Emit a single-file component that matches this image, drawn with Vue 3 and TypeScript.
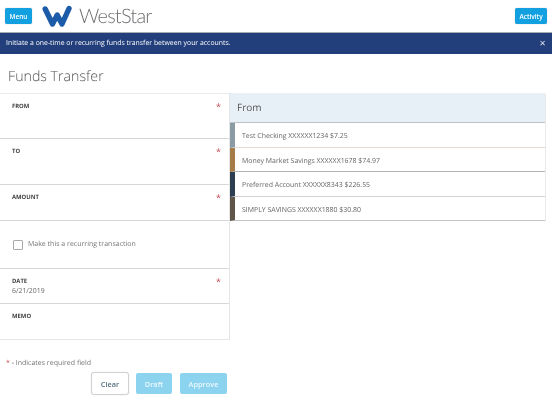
<script setup lang="ts">
import { ref } from 'vue'

const accounts = [
  { label: 'Test Checking XXXXXX1234 $7.25', color: '#8a9ba5', line: '#e3dcd6' },
  { label: 'Money Market Savings XXXXXX1678 $74.97', color: '#a57c45', line: '#b5b5b5' },
  { label: 'Preferred Account XXXXXX8343 $226.55', color: '#2c3e50', line: '#d3d3d3' },
  { label: 'SIMPLY SAVINGS XXXXXX1880 $30.80', color: '#5f5548', line: '#c4c4c4' }
]

const showBanner = ref(true)
const recurring = ref(false)
</script>

<template>
  <div class="page">
    <header class="topbar">
      <button class="btn-top btn-menu">Menu</button>
      <div class="logo">
        <svg class="logo-mark" viewBox="0 0 30 22" width="30" height="22">
          <path
            d="M3.2 4 L10.5 19 L15.2 10 L20 19 L27 3.5"
            fill="none"
            stroke="#1c5ba8"
            stroke-width="5.4"
            stroke-linecap="round"
            stroke-linejoin="round"
          />
        </svg>
        <span class="logo-text">WestStar</span>
      </div>
      <button class="btn-top btn-activity">Activity</button>
    </header>

    <div v-if="showBanner" class="banner">
      <span>Initiate a one-time or recurring funds transfer between your accounts.</span>
      <span class="banner-close" @click="showBanner = false">✕</span>
    </div>

    <h1 class="title">Funds Transfer</h1>

    <div class="columns">
      <div class="left">
        <div class="form">
          <div class="field field-from">
            <div class="field-head"><label>FROM</label><span class="req">*</span></div>
          </div>
          <div class="field field-to">
            <div class="field-head"><label>TO</label><span class="req">*</span></div>
          </div>
          <div class="field field-amount">
            <div class="field-head"><label>AMOUNT</label><span class="req">*</span></div>
          </div>
          <div class="field field-check">
            <span class="checkbox" @click="recurring = !recurring"></span>
            <span class="check-label">Make this a recurring transaction</span>
          </div>
          <div class="field field-date">
            <div class="field-head"><label>DATE</label><span class="req">*</span></div>
            <div class="value">6/21/2019</div>
          </div>
          <div class="field field-memo">
            <div class="field-head"><label>MEMO</label></div>
          </div>
        </div>

        <p class="note"><span class="req-note">*</span> - Indicates required field</p>

        <div class="actions">
          <button class="btn btn-clear">Clear</button>
          <button class="btn btn-off">Draft</button>
          <button class="btn btn-off btn-approve">Approve</button>
        </div>
      </div>

      <div class="panel">
        <div class="panel-head">From</div>
        <div
          v-for="a in accounts"
          :key="a.label"
          class="account"
          :style="{ borderLeftColor: a.color, borderBottomColor: a.line }"
        >
          {{ a.label }}
        </div>
      </div>
    </div>
  </div>
</template>

<style>
html,
body {
  margin: 0;
  background: #fff;
}
</style>

<style scoped>
.page {
  width: 552px;
  height: 414px;
  overflow: hidden;
  font-family: 'Open Sans', 'Liberation Sans', sans-serif;
  color: #555;
  text-rendering: geometricPrecision;
  will-change: transform;
}

.topbar {
  height: 32px;
  display: flex;
  align-items: center;
  justify-content: space-between;
  padding: 0 5px;
  box-sizing: border-box;
}

.btn-top {
  height: 16px;
  padding: 0;
  border: none;
  border-radius: 2px;
  background: #12a0e0;
  color: #fff;
  font-family: inherit;
  font-size: 6.5px;
  font-weight: 600;
  box-shadow: 0 0 1px rgba(0, 0, 0, 0.4);
}

.btn-menu {
  width: 27px;
}

.btn-activity {
  width: 32px;
}

.logo {
  display: flex;
  align-items: center;
  flex: 1;
  margin-left: 10px;
}

.logo-text {
  margin-left: 7px;
  font-family: Lato, 'Open Sans', sans-serif;
  font-size: 20px;
  font-weight: 300;
  letter-spacing: -0.8px;
  line-height: 22px;
  color: #6d6e71;
}

.banner {
  height: 22px;
  background: #223f7c;
  border-top: 1px solid #a9adb5;
  color: #fff;
  font-size: 6.9px;
  display: flex;
  align-items: center;
  justify-content: space-between;
  padding: 0 6px;
  box-sizing: border-box;
}

.banner-close {
  font-size: 8px;
  color: #dde;
  cursor: pointer;
}

.title {
  margin: 0;
  padding: 13px 0 6px 8px;
  font-size: 14.2px;
  line-height: 20px;
  font-weight: 300;
  color: #555;
}

.columns {
  display: flex;
  align-items: flex-start;
}

.left {
  width: 230px;
  flex-shrink: 0;
}

.form {
  border-top: 1px solid #e9e9e9;
  border-right: 1px solid #e6e6e6;
  border-bottom: 1px solid #e6e6e6;
}

.field {
  box-sizing: border-box;
  padding: 8px 8px 0 12px;
  border-bottom: 1px solid #d8d8d8;
}

.field:last-child {
  border-bottom: none;
}

.field-from {
  height: 45px;
}

.field-to {
  height: 46px;
}

.field-amount {
  height: 36px;
}

.field-check {
  height: 48px;
  display: flex;
  align-items: center;
  padding-top: 0;
  padding-bottom: 0;
}

.field-date {
  height: 35px;
}

.field-memo {
  height: 35px;
}

.field-head {
  display: flex;
  justify-content: space-between;
  align-items: flex-start;
  height: 9px;
}

label {
  font-size: 5.9px;
  line-height: 9px;
  font-weight: 700;
  color: #444;
}

.req {
  color: #c0474f;
  font-size: 9px;
  line-height: 10px;
}

.value {
  font-size: 6.9px;
  line-height: 11px;
  color: #666;
}

.checkbox {
  width: 8px;
  height: 8px;
  border: 1px solid #aaa;
  border-radius: 1px;
  margin: 0 5px 0 1px;
  cursor: pointer;
}

.check-label {
  font-size: 7px;
  color: #777;
}

.note {
  margin: 18px 0 0 6px;
  font-size: 7px;
  line-height: 11px;
  color: #777;
}

.req-note {
  color: #c0474f;
}

.actions {
  display: flex;
  justify-content: flex-end;
  gap: 8px;
  margin-top: 4px;
  padding-right: 3px;
}

.btn {
  height: 21px;
  padding: 0;
  border-radius: 2px;
  border: none;
  font-family: inherit;
  font-size: 7.4px;
  font-weight: 600;
}

.btn-clear {
  width: 36px;
  background: #fff;
  color: #56707c;
  box-shadow: 0 0 1px 1px #ccc;
}

.btn-off {
  width: 36px;
  background: #8cd3f0;
  color: #eaf7fd;
}

.btn-approve {
  width: 47px;
}

.panel {
  width: 316px;
  border-right: 1px solid #e9e9e9;
  box-sizing: border-box;
}

.panel-head {
  height: 30px;
  line-height: 29px;
  box-sizing: border-box;
  padding-left: 7px;
  background: #e8f0f7;
  border-top-right-radius: 2px;
  border-bottom: 1px solid #bcc3c8;
  font-size: 10px;
  color: #555;
}

.account {
  height: 24.5px;
  line-height: 27px;
  box-sizing: border-box;
  padding-left: 7px;
  border-left: 5px solid;
  border-bottom: 1px solid;
  font-size: 6.95px;
  color: #666;
}
</style>
